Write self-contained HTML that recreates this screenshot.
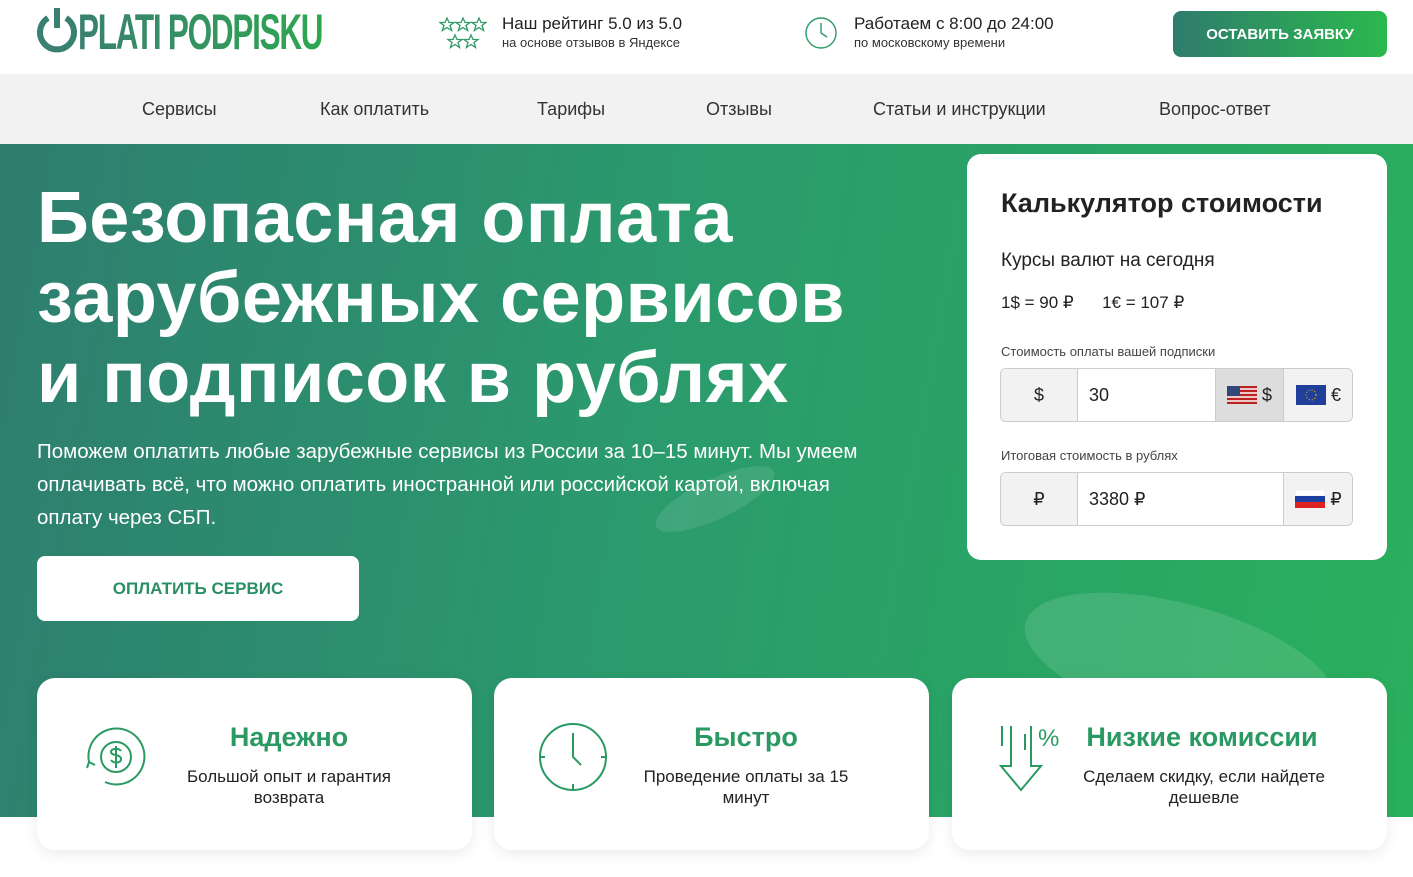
<!DOCTYPE html>
<html><head><meta charset="utf-8"><style>
*{margin:0;padding:0;box-sizing:border-box}
body{width:1413px;height:877px;overflow:hidden;background:#fff;font-family:"Liberation Sans","DejaVu Sans",sans-serif;color:#222;position:relative}
.hdr{height:74px;position:relative;background:#fff}
.logo{position:absolute;left:36px;top:4px;font-size:50px;font-weight:bold;letter-spacing:-2px;transform:scaleX(.63);transform-origin:left;background:linear-gradient(90deg,#3a8070,#2ea750);-webkit-background-clip:text;color:transparent;line-height:56px;white-space:nowrap}
.info{position:absolute;top:14px}
.info b{display:block;font-weight:normal;font-size:17px;color:#222}
.info span{font-size:13px;color:#333}
.btn{position:absolute;left:1173px;top:11px;width:214px;height:46px;border-radius:8px;background:linear-gradient(90deg,#2f7c6c,#2bb94e);color:#fff;font-weight:bold;font-size:15px;display:flex;align-items:center;justify-content:center}
.nav{height:70px;background:#f2f2f2;position:relative;font-size:18px;color:#333}
.nav span{position:absolute;top:25px}
.hero{position:absolute;top:144px;left:0;width:1413px;height:673px;background:linear-gradient(100deg,#2e7d6f 0%,#2b9a6d 45%,#29b05c 100%);overflow:hidden}
h1{position:absolute;left:37px;top:34px;color:#fff;font-size:72px;line-height:80px;font-weight:bold;letter-spacing:0.5px;white-space:nowrap}
.lead{position:absolute;left:37px;top:291px;width:860px;color:#fff;font-size:20.5px;line-height:33px}
.pay{position:absolute;left:37px;top:412px;width:322px;height:65px;background:#fff;border-radius:8px;color:#2a8e66;font-weight:bold;font-size:17px;display:flex;align-items:center;justify-content:center}
.calc{position:absolute;left:967px;top:154px;width:420px;height:406px;background:#fff;border-radius:14px}
.calc h2{position:absolute;left:34px;top:34px;font-size:27px}
.field{position:absolute;left:33px;width:353px;height:54px;border:1px solid #ccc;border-radius:6px;overflow:hidden}
.field div{position:absolute;top:0;height:52px;display:flex;align-items:center;justify-content:center;font-size:18px}
.card{position:absolute;top:678px;width:435px;height:172px;background:#fff;border-radius:18px;box-shadow:0 4px 14px rgba(0,0,0,.08)}
.card h3{position:absolute;top:44px;color:#2a9a62;font-size:27px;text-align:center}
.card p{position:absolute;top:88px;font-size:17px;line-height:21px;text-align:center;color:#222}
</style></head><body>
<div class="hdr">
<svg style="position:absolute;left:36px;top:8px" width="42" height="46" viewBox="0 0 42 46" fill="none" stroke="#3a8070" stroke-width="6"><path d="M12 10A17 17 0 1 0 30 10"/><path d="M21 0v20"/></svg>
<div class="logo" style="left:78px">PLATI PODPISKU</div>
<svg style="position:absolute;left:439px;top:17px" width="48" height="32" viewBox="0 0 48 32" fill="none" stroke="#2e9a66" stroke-width="1.3"><defs><path id="s" d="M7 1l2 4.5h5l-4 3 1.6 5L7 10.5 2.4 13.5 4 8.5 0 5.5h5z"/></defs><use href="#s" x="1"/><use href="#s" x="17"/><use href="#s" x="33"/><use href="#s" x="9" y="17"/><use href="#s" x="25" y="17"/></svg>
<div class="info" style="left:502px"><b>Наш рейтинг 5.0 из 5.0</b><span>на основе отзывов в Яндексе</span></div>
<svg style="position:absolute;left:804px;top:16px" width="34" height="34" viewBox="0 0 34 34" fill="none" stroke="#2e9a66" stroke-width="1.4"><circle cx="17" cy="17" r="15"/><path d="M17 7v10l6 4"/></svg>
<div class="info" style="left:854px"><b>Работаем с 8:00 до 24:00</b><span>по московскому времени</span></div>
<div class="btn">ОСТАВИТЬ ЗАЯВКУ</div>
</div>
<div class="nav"><span style="left:142px">Сервисы</span><span style="left:320px">Как оплатить</span><span style="left:537px">Тарифы</span><span style="left:706px">Отзывы</span><span style="left:873px">Статьи и инструкции</span><span style="left:1159px">Вопрос-ответ</span></div>
<div class="hero">
<svg style="position:absolute;left:0;top:0" width="1413" height="673"><ellipse cx="1180" cy="520" rx="160" ry="60" transform="rotate(15 1180 520)" fill="rgba(255,255,255,.12)"/><ellipse cx="715" cy="355" rx="65" ry="20" transform="rotate(-25 715 355)" fill="rgba(255,255,255,.1)"/></svg>
<h1>Безопасная оплата<br>зарубежных сервисов<br>и подписок в рублях</h1>
<div class="lead">Поможем оплатить любые зарубежные сервисы из России за 10–15 минут. Мы умеем оплачивать всё, что можно оплатить иностранной или российской картой, включая оплату через СБП.</div>
<div class="pay">ОПЛАТИТЬ СЕРВИС</div>
</div>
<div class="calc">
<h2>Калькулятор стоимости</h2>
<div style="position:absolute;left:34px;top:96px;font-size:19px">Курсы валют на сегодня</div>
<div style="position:absolute;left:34px;top:139px;font-size:17px">1$ = 90 ₽ &nbsp;&nbsp;&nbsp;&nbsp;&nbsp;1€ = 107 ₽</div>
<div style="position:absolute;left:34px;top:190px;font-size:13px;color:#444">Стоимость оплаты вашей подписки</div>
<div class="field" style="top:214px"><div style="left:0;width:77px;background:#f2f2f2;border-right:1px solid #ccc">$</div><div style="left:88px;justify-content:flex-start">30</div><div style="left:214px;width:68px;background:#ddd;border-left:1px solid #ccc"><svg width="30" height="18"><rect width="30" height="18" fill="#b22"/><path d="M0 3h30M0 7h30M0 11h30M0 15h30" stroke="#fff" stroke-width="1.4"/><rect width="13" height="10" fill="#33467a"/></svg>&nbsp;$</div><div style="left:282px;width:70px;background:#f2f2f2;border-left:1px solid #ccc"><svg width="30" height="20"><rect width="30" height="20" fill="#1f3f9a"/><circle cx="15" cy="10" r="5" fill="none" stroke="#fc0" stroke-dasharray="1 2"/></svg>&nbsp;€</div></div>
<div style="position:absolute;left:34px;top:294px;font-size:13px;color:#444">Итоговая стоимость в рублях</div>
<div class="field" style="top:318px"><div style="left:0;width:77px;background:#f2f2f2;border-right:1px solid #ccc">₽</div><div style="left:88px;justify-content:flex-start">3380 ₽</div><div style="left:282px;width:70px;background:#f2f2f2;border-left:1px solid #ccc"><svg width="30" height="18"><rect width="30" height="6" fill="#fff" stroke="#ddd" stroke-width=".5"/><rect y="6" width="30" height="6" fill="#1c3fa0"/><rect y="12" width="30" height="6" fill="#d22"/></svg>&nbsp;₽</div></div>
</div>
<div class="card" style="left:37px">
<svg style="position:absolute;left:44px;top:44px" width="70" height="70" viewBox="0 0 70 70" fill="none" stroke="#2a9a62" stroke-width="2"><path d="M8 40A28 28 0 1 1 24 60"/><path d="M6 46l2-6 6 3"/><circle cx="35" cy="35" r="15"/><path d="M40 29c-2-3-10-3-10 1s10 2 10 7-8 4-10 1M35 24v22"/></svg>
<h3 style="left:0;width:504px">Надежно</h3><p style="left:130px;width:244px">Большой опыт и гарантия возврата</p></div>
<div class="card" style="left:494px">
<svg style="position:absolute;left:44px;top:44px" width="70" height="70" viewBox="0 0 70 70" fill="none" stroke="#2a9a62" stroke-width="2"><circle cx="35" cy="35" r="33"/><path d="M35 11v24l8 8M35 62v5M3 35h4M63 35h4"/></svg>
<h3 style="left:0;width:504px">Быстро</h3><p style="left:130px;width:244px">Проведение оплаты за 15 минут</p></div>
<div class="card" style="left:952px">
<svg style="position:absolute;left:46px;top:44px" width="70" height="70" viewBox="0 0 70 70" fill="none" stroke="#2a9a62" stroke-width="2"><path d="M4 4v20M13 4v40H3l20 24 20-24H33V4M27 12v16"/><text x="40" y="24" font-size="24" fill="#2a9a62" stroke="none" font-family="Liberation Sans">%</text></svg>
<h3 style="left:130px;width:240px">Низкие комиссии</h3><p style="left:110px;width:284px">Сделаем скидку, если найдете дешевле</p></div>
</body></html>
